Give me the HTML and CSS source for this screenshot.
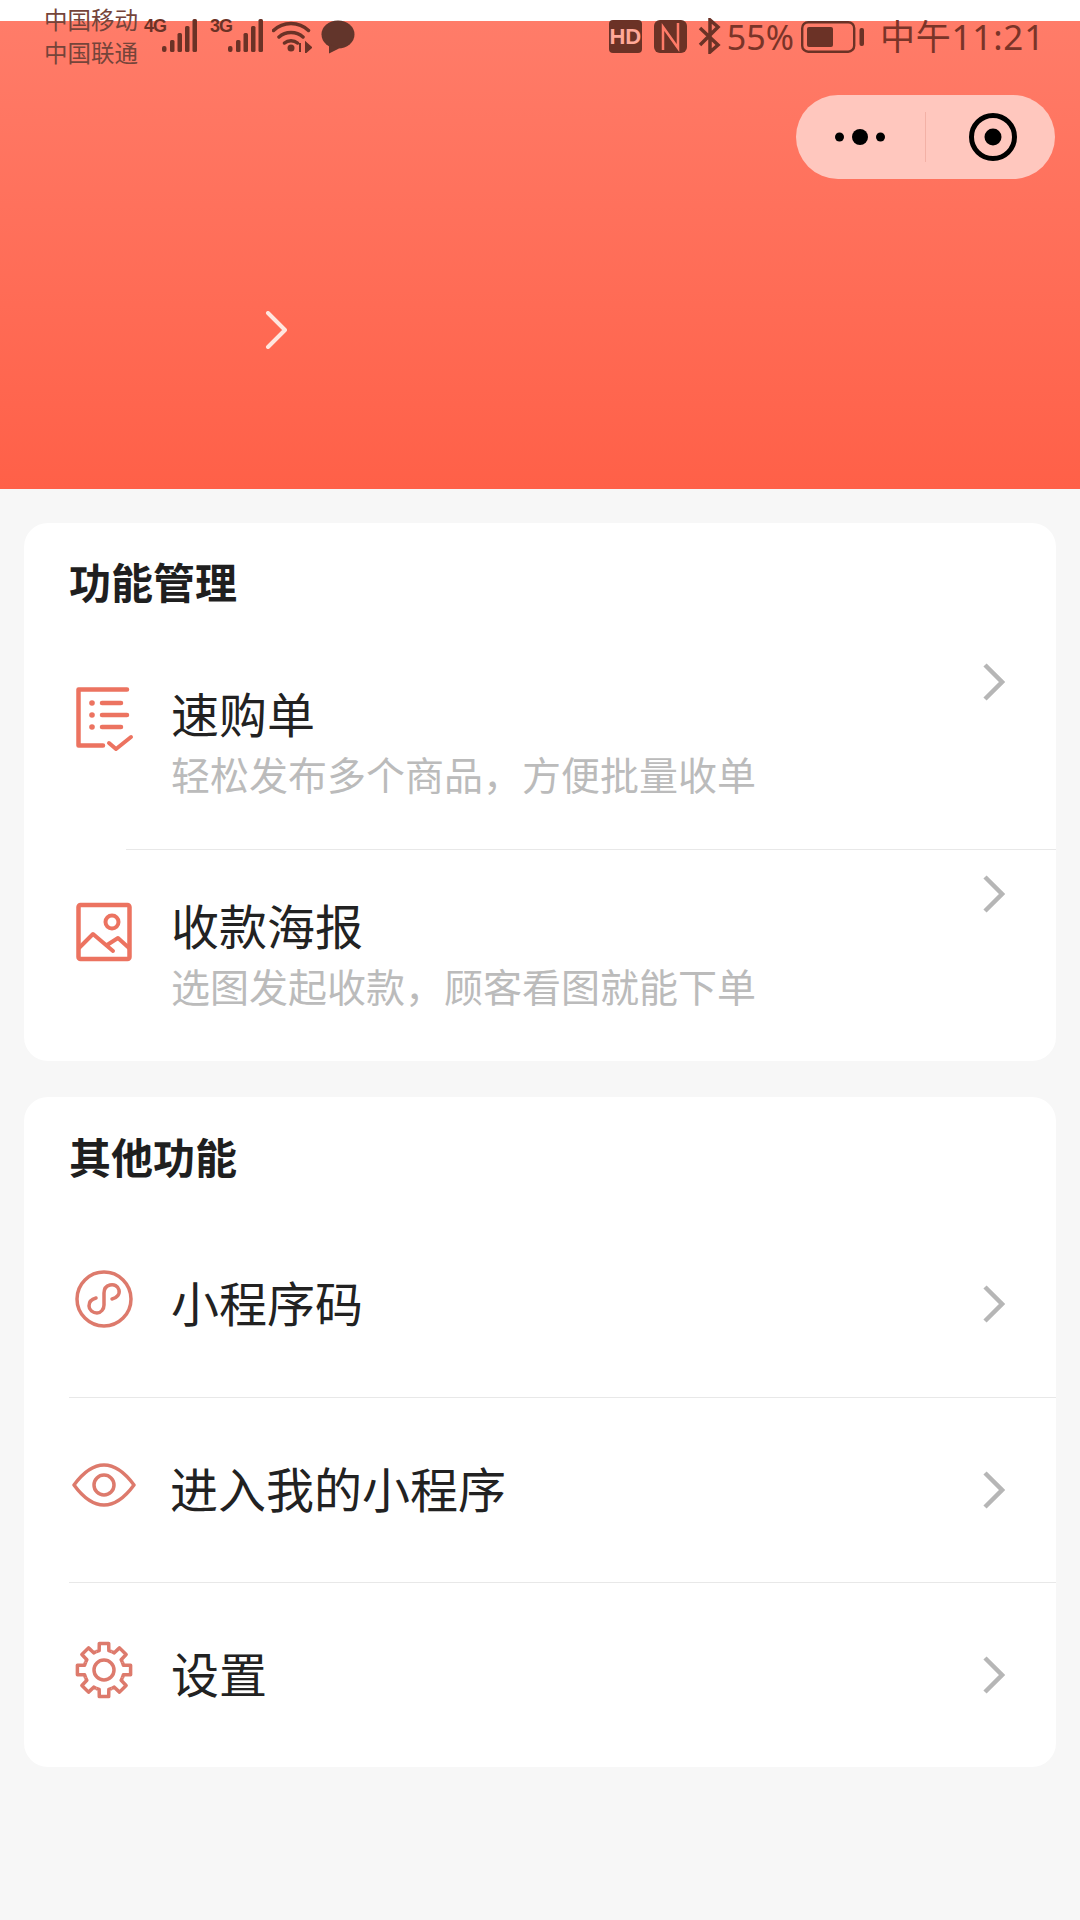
FILE: index.html
```html
<!DOCTYPE html>
<html>
    <head>
        <title>我的</title>
        <meta charset="UTF-8">
        <meta name="viewport" content="width=device-width, initial-scale=1.0">
        <link rel="stylesheet" href="styles.css">
    </head>
    <body>
        <div class="header">
            <div class="status">
                <div class="status-left">
                    <div class="carrier">中国移动<br>中国联通</div>
                    <div class="net">
                        <span class="net-label">4G</span>
                        <svg width="35" height="36" viewBox="0 0 35 36">
                            <g class="bars">
                                <rect x="0" y="28" width="4.500" height="6" rx="2"/><rect x="8" y="22" width="4.500" height="12" rx="1.500"/><rect x="15.500" y="15" width="4.500" height="19" rx="1.500"/><rect x="23" y="8" width="4.500" height="26" rx="1.500"/><rect x="30.500" y="1" width="4.500" height="33" rx="1.500"/>
                            </g>
                        </svg>
                    </div>
                    <div class="net net-next">
                        <span class="net-label">3G</span>
                        <svg width="35" height="36" viewBox="0 0 35 36">
                            <g class="bars">
                                <rect x="0" y="28" width="4.500" height="6" rx="2"/><rect x="8" y="22" width="4.500" height="12" rx="1.500"/><rect x="15.500" y="15" width="4.500" height="19" rx="1.500"/><rect x="23" y="8" width="4.500" height="26" rx="1.500"/><rect x="30.500" y="1" width="4.500" height="33" rx="1.500"/>
                            </g>
                        </svg>
                    </div>
                    <svg class="wifi" width="40" height="34" viewBox="0 0 40 34">
                        <path d="M1.500 11.500C11 2 27 2 36.500 11.500M7 18c6.500-6 17.500-6 24 0M12.500 24c3.500-3 9.500-3 13 0" fill="none" stroke="#6b3226" stroke-width="3.500" stroke-linecap="round"/>
                        <circle cx="19" cy="29" r="3.500" fill="#6b3226"/>
                        <path d="M28 24v9M34 24v9l5-4.500z" fill="#6b3226" stroke="#6b3226" stroke-width="2"/>
                    </svg>
                    <svg class="bubble" width="34" height="34" viewBox="0 0 34 34">
                        <ellipse cx="17" cy="14.500" rx="16.500" ry="14" fill="#62352b"/>
                        <path d="M8 24v9.500l10-5z" fill="#62352b"/>
                    </svg>
                </div>
                <div class="status-right">
                    <div class="hd">HD</div>
                    <svg width="33" height="33" viewBox="0 0 33 33">
                        <rect width="33" height="33" rx="6" fill="#6b3226"/>
                        <path d="M9 30V7l15 21V3" fill="none" stroke="#ff7b68" stroke-width="2.500"/>
                    </svg>
                    <svg class="bt" width="23" height="36" viewBox="0 0 23 36">
                        <path d="M2 10l18 17-8 7V2l8 7L2 27" fill="none" stroke="#6b3226" stroke-width="3.500"/>
                    </svg>
                    <span class="percent">55%</span>
                    <svg class="battery" width="63" height="32" viewBox="0 0 63 32">
                        <rect x="1.200" y="1.200" width="52" height="29.500" rx="6" fill="none" stroke="#6b3226" stroke-width="2.400"/>
                        <rect x="6" y="6" width="26" height="20" rx="2" fill="#6b3226"/>
                        <rect x="58.500" y="7" width="4.500" height="18" rx="2" fill="#6b3226"/>
                    </svg>
                    <span class="clock">中午11:21</span>
                </div>
            </div>
            <div class="capsule">
                <svg class="dots" width="50" height="16" viewBox="0 0 50 16">
                    <circle cx="4.500" cy="8" r="4.500"/><circle cx="25" cy="8" r="8"/><circle cx="45.500" cy="8" r="4.500"/>
                </svg>
                <div class="capsule-line"></div>
                <svg class="target" width="50" height="50" viewBox="0 0 50 50">
                    <circle cx="25" cy="25" r="21.500" fill="none" stroke="#000" stroke-width="5"/>
                    <circle cx="25" cy="25" r="8.500"/>
                </svg>
            </div>
            <svg class="header-arrow" width="22" height="38" viewBox="0 0 22 38">
                <path d="M3 2l17 17L3 36" fill="none" stroke="#ffe6df" stroke-width="4" stroke-linecap="round" stroke-linejoin="round"/>
            </svg>
        </div>

        <div class="card">
            <h2 class="card-title">功能管理</h2>
            <div class="row row-tall">
                <svg class="icon" width="58" height="66" viewBox="0 0 58 66">
                    <path d="M51 2.500H2.500V58.500H27" fill="none" stroke="#ec7360" stroke-width="4.500" stroke-linecap="round" stroke-linejoin="round"/>
                    <path d="M26 16h19M26 28h25M26 40h19" fill="none" stroke="#ec7360" stroke-width="4.500" stroke-linecap="round"/>
                    <circle cx="16" cy="16" r="2.800" fill="#ec7360"/><circle cx="16" cy="28" r="2.800" fill="#ec7360"/><circle cx="16" cy="40" r="2.800" fill="#ec7360"/>
                    <path d="M33 56l7 6 15-12" fill="none" stroke="#ec7360" stroke-width="4" stroke-linecap="round" stroke-linejoin="round"/>
                </svg>
                <div class="row-text">
                    <div class="row-name">速购单</div>
                    <div class="row-sub">轻松发布多个商品，方便批量收单</div>
                </div>
                <svg class="arrow" width="22" height="38" viewBox="0 0 22 38">
                    <path d="M2 2l17 17L2 36" fill="none" stroke="#b6b6b6" stroke-width="4.500"/>
                </svg>
            </div>
            <div class="line"></div>
            <div class="row row-tall">
                <svg class="icon" width="58" height="66" viewBox="0 0 58 66">
                    <rect x="2.500" y="6" width="51" height="54" rx="2" fill="none" stroke="#ec7360" stroke-width="4.500"/>
                    <circle cx="36" cy="23" r="6.500" fill="none" stroke="#ec7360" stroke-width="4"/>
                    <path d="M3 49l14-14 20 17M31 46l11-7 11 10" fill="none" stroke="#ec7360" stroke-width="4" stroke-linecap="round" stroke-linejoin="round"/>
                </svg>
                <div class="row-text">
                    <div class="row-name">收款海报</div>
                    <div class="row-sub">选图发起收款，顾客看图就能下单</div>
                </div>
                <svg class="arrow" width="22" height="38" viewBox="0 0 22 38">
                    <path d="M2 2l17 17L2 36" fill="none" stroke="#b6b6b6" stroke-width="4.500"/>
                </svg>
            </div>
        </div>

        <div class="card card-next">
            <h2 class="card-title">其他功能</h2>
            <div class="row row-short">
                <svg class="icon-small" width="58" height="58" viewBox="0 0 58 58">
                    <circle cx="29" cy="29" r="27" fill="none" stroke="#dd7a6c" stroke-width="3.500"/>
                    <path d="M37 29c5-1 8-5 7-9-1-4-5-6-9-5-4 1-6 4-6 8v12c0 4-3 8-7 8-4 0-8-3-8-7 0-4 3-7 7-8" fill="none" stroke="#dd7a6c" stroke-width="3.500" stroke-linecap="round"/>
                </svg>
                <div class="row-name row-single">小程序码</div>
                <svg class="arrow arrow-mid" width="22" height="38" viewBox="0 0 22 38">
                    <path d="M2 2l17 17L2 36" fill="none" stroke="#b6b6b6" stroke-width="4.500"/>
                </svg>
            </div>
            <div class="line line-long"></div>
            <div class="row row-short">
                <svg class="icon-small icon-eye" width="64" height="58" viewBox="-3 0 64 58">
                    <path d="M-1 29C10 14 19 9 29 9S48 14 59 29C48 44 39 49 29 49S10 44-1 29Z" fill="none" stroke="#dd7a6c" stroke-width="3.500" stroke-linejoin="round"/>
                    <circle cx="29" cy="29" r="10" fill="none" stroke="#dd7a6c" stroke-width="3.500"/>
                </svg>
                <div class="row-name row-single">进入我的小程序</div>
                <svg class="arrow arrow-mid" width="22" height="38" viewBox="0 0 22 38">
                    <path d="M2 2l17 17L2 36" fill="none" stroke="#b6b6b6" stroke-width="4.500"/>
                </svg>
            </div>
            <div class="line line-long"></div>
            <div class="row row-short">
                <svg class="icon-small" width="58" height="58" viewBox="-29 -29 58 58">
                    <defs>
                        <path id="tooth" d="M-7.650-18.480L-4.840-19.400-4.700-26.600H4.700L4.840-19.400 7.650-18.480" fill="none" stroke="#dd7a6c" stroke-width="3.500" stroke-linejoin="round"/>
                    </defs>
                    <use href="#tooth"/>
                    <use href="#tooth" transform="rotate(45)"/>
                    <use href="#tooth" transform="rotate(90)"/>
                    <use href="#tooth" transform="rotate(135)"/>
                    <use href="#tooth" transform="rotate(180)"/>
                    <use href="#tooth" transform="rotate(225)"/>
                    <use href="#tooth" transform="rotate(270)"/>
                    <use href="#tooth" transform="rotate(315)"/>
                    <circle r="10" fill="none" stroke="#dd7a6c" stroke-width="3.500"/>
                </svg>
                <div class="row-name row-single">设置</div>
                <svg class="arrow arrow-mid" width="22" height="38" viewBox="0 0 22 38">
                    <path d="M2 2l17 17L2 36" fill="none" stroke="#b6b6b6" stroke-width="4.500"/>
                </svg>
            </div>
        </div>
    </body>
</html>
```

FILE: styles.css
```css
body {
    margin: 0;
    min-height: 1920px;
    background-color: #f7f7f7;
    color: #222;
    font-family: "Noto Sans", "Noto Sans CJK SC", sans-serif;
}
svg {
    display: block;
    flex: none;
}

/* top banner, the first 21px stay white behind the status bar */
.header {
    height: 489px;
    overflow: hidden;
    background: #fff linear-gradient(#ff7c69, #ff6048) no-repeat 0 21px / 100% 468px;
}
.status {
    height: 80px;
    display: flex;
    justify-content: space-between;
    align-items: flex-start;
}
.status-left {
    display: flex;
    align-items: flex-start;
    padding-left: 44px;
}
.carrier {
    width: 100px;
    padding-top: 4px;
    font-size: 23.500px;
    line-height: 33px;
    color: #75443a;
}
.net {
    display: flex;
    align-items: flex-start;
    margin-top: 18px;
}
.net-next {
    margin-left: 13px;
}
.net-label {
    width: 18px;
    font-family: "Liberation Sans Narrow", "Liberation Sans", sans-serif;
    font-size: 18px;
    line-height: 16px;
    font-weight: bold;
    letter-spacing: -1px;
    color: #6b3226;
}
.bars {
    fill: #6b3226;
}
.wifi {
    margin: 19px 0 0 9px;
}
.bubble {
    margin: 20px 0 0 9px;
}
.status-right {
    display: flex;
    align-items: flex-start;
    gap: 12px;
    padding: 20px 35px 0 0;
    color: #7a3428;
    font-size: 34px;
    line-height: 34px;
}
.hd {
    width: 33px;
    height: 33px;
    border-radius: 4px;
    background-color: #6b3226;
    color: #ffa898;
    font-family: "Liberation Sans Narrow", "Liberation Sans", sans-serif;
    font-size: 22px;
    line-height: 33px;
    font-weight: bold;
    text-align: center;
}
.bt {
    margin: -2px -6px 0 -1px;
}
.percent {
    margin-right: -5px;
}
.battery {
    margin: 1px 4px 0 0;
}
.clock {
    font-size: 35px;
    letter-spacing: 0.800px;
}
.capsule {
    width: 259px;
    height: 84px;
    margin: 15px 25px 0 auto;
    display: flex;
    align-items: center;
    border-radius: 42px;
    background-color: #ffc7be;
}
.dots {
    margin-left: 39px;
}
.capsule-line {
    width: 1px;
    height: 50px;
    margin-left: 40px;
    background-color: #f3b1a6;
}
.target {
    margin-left: 42px;
}
.header-arrow {
    margin: 132px 0 0 265px;
}

.card {
    margin: 34px 24px 0;
    border-radius: 24px;
    background-color: #fff;
    overflow: hidden;
}
.card-next {
    margin-top: 36px;
}
.card-title {
    height: 115px;
    margin: 0;
    padding: 39px 0 0 45px;
    box-sizing: border-box;
    font-size: 42px;
    line-height: 42px;
    font-weight: bold;
    color: #1f1f1f;
}
.card-next .card-title {
    padding-top: 40px;
}
.row {
    display: flex;
    align-items: flex-start;
    padding: 0 51px 0 52px;
}
.row-tall {
    height: 211px;
}
.row-short {
    height: 184.500px;
    align-items: center;
}
.row-short:last-child {
    height: 183.500px;
}
.icon {
    margin-top: 49px;
}
.icon-small {
    margin: 0 0 10px -1px;
}
.icon-eye {
    margin-left: -4px;
    margin-right: -4px;
}
.row-text {
    flex: 1;
    padding-top: 47px;
    margin-left: 37px;
}
.row-name {
    font-size: 48px;
    line-height: 60px;
    color: #222;
}
.row-single {
    flex: 1;
    margin-left: 38px;
}
.row-sub {
    font-size: 39px;
    line-height: 60px;
    color: #bbb;
}
.arrow {
    margin-top: 25px;
}
.arrow-mid {
    margin-top: 0;
}
.line {
    height: 1px;
    margin-left: 102px;
    background-color: #e8e8e8;
}
.line-long {
    margin-left: 45px;
}
```
